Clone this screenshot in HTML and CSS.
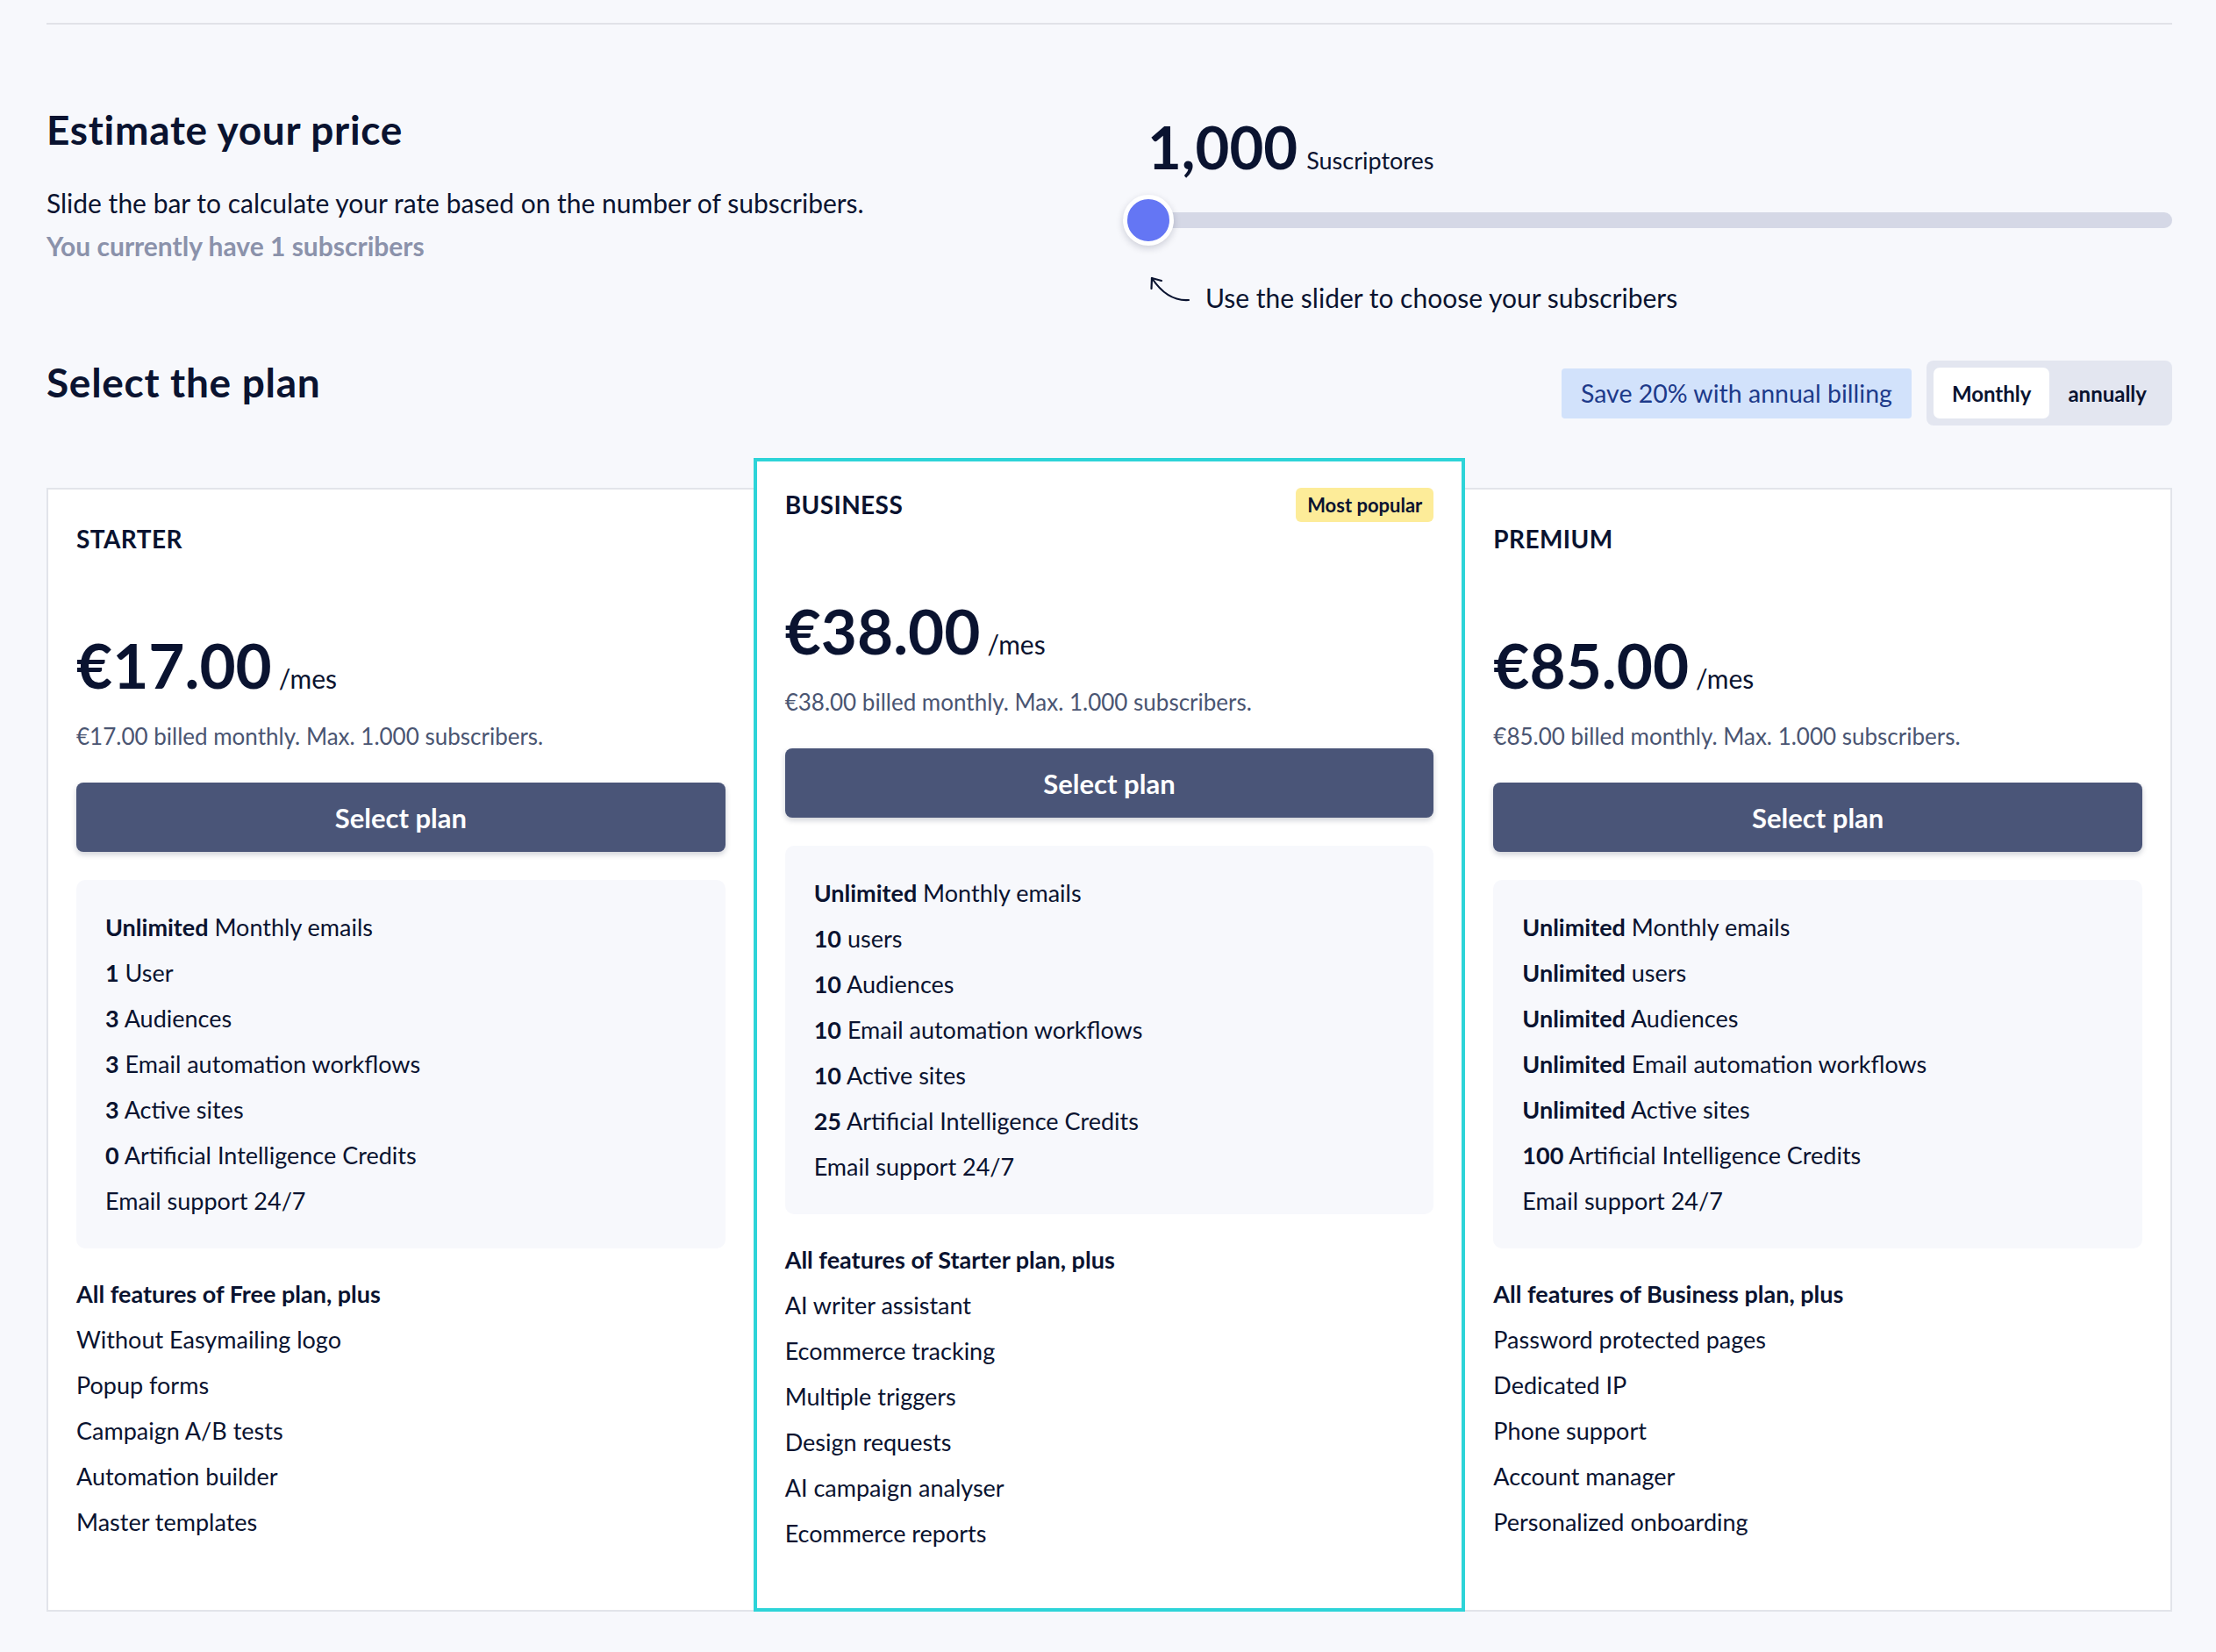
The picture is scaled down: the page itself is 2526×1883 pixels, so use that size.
FILE: index.html
```html
<!DOCTYPE html>
<html lang="en">
<head>
    <meta charset="UTF-8">
    <meta name="viewport" content="width=device-width, initial-scale=1.0">
    <title>Pricing</title>
    <link rel="stylesheet" href="styles.css">
</head>
<body>
    <div class="page">
        <hr class="divider">

        <section class="estimate">
            <div class="estimate-text">
                <h2>Estimate your price</h2>
                <p class="lead">Slide the bar to calculate your rate based on the number of subscribers.</p>
                <p class="current">You currently have 1 subscribers</p>
            </div>
            <div class="estimate-slider">
                <div class="count">
                    <span class="count-num">1,000</span>
                    <span class="count-label">Suscriptores</span>
                </div>
                <div class="slider">
                    <div class="track"></div>
                    <div class="thumb"></div>
                </div>
                <div class="hint">
                    <svg width="46" height="30" viewBox="0 0 46 30" fill="none" stroke="#0a1330" stroke-width="2.2" stroke-linecap="round" stroke-linejoin="round">
                        <path d="M45 28 C31 29 17 24 3 3"/>
                        <path d="M3 3 L2.5 15"/>
                        <path d="M3 3 L14 6"/>
                    </svg>
                    <span>Use the slider to choose your subscribers</span>
                </div>
            </div>
        </section>

        <section class="plans-head">
            <h2>Select the plan</h2>
            <div class="billing">
                <span class="save">Save 20% with annual billing</span>
                <div class="toggle">
                    <button class="active">Monthly</button>
                    <button>annually</button>
                </div>
            </div>
        </section>

        <section class="plans">
            <div class="plan">
                <div class="plan-head">
                    <h3>STARTER</h3>
                </div>
                <div class="price"><span class="amount">€17.00</span><span class="per">/mes</span></div>
                <p class="billed">€17.00 billed monthly. Max. 1.000 subscribers.</p>
                <button class="select">Select plan</button>
                <ul class="limits">
                    <li><b>Unlimited</b> Monthly emails</li>
                    <li><b>1</b> User</li>
                    <li><b>3</b> Audiences</li>
                    <li><b>3</b> Email automation workflows</li>
                    <li><b>3</b> Active sites</li>
                    <li><b>0</b> Artificial Intelligence Credits</li>
                    <li>Email support 24/7</li>
                </ul>
                <ul class="extras">
                    <li class="extras-title">All features of Free plan, plus</li>
                    <li>Without Easymailing logo</li>
                    <li>Popup forms</li>
                    <li>Campaign A/B tests</li>
                    <li>Automation builder</li>
                    <li>Master templates</li>
                </ul>
            </div>

            <div class="plan popular">
                <div class="plan-head">
                    <h3>BUSINESS</h3>
                    <span class="badge">Most popular</span>
                </div>
                <div class="price"><span class="amount">€38.00</span><span class="per">/mes</span></div>
                <p class="billed">€38.00 billed monthly. Max. 1.000 subscribers.</p>
                <button class="select">Select plan</button>
                <ul class="limits">
                    <li><b>Unlimited</b> Monthly emails</li>
                    <li><b>10</b> users</li>
                    <li><b>10</b> Audiences</li>
                    <li><b>10</b> Email automation workflows</li>
                    <li><b>10</b> Active sites</li>
                    <li><b>25</b> Artificial Intelligence Credits</li>
                    <li>Email support 24/7</li>
                </ul>
                <ul class="extras">
                    <li class="extras-title">All features of Starter plan, plus</li>
                    <li>AI writer assistant</li>
                    <li>Ecommerce tracking</li>
                    <li>Multiple triggers</li>
                    <li>Design requests</li>
                    <li>AI campaign analyser</li>
                    <li>Ecommerce reports</li>
                </ul>
            </div>

            <div class="plan">
                <div class="plan-head">
                    <h3>PREMIUM</h3>
                </div>
                <div class="price"><span class="amount">€85.00</span><span class="per">/mes</span></div>
                <p class="billed">€85.00 billed monthly. Max. 1.000 subscribers.</p>
                <button class="select">Select plan</button>
                <ul class="limits">
                    <li><b>Unlimited</b> Monthly emails</li>
                    <li><b>Unlimited</b> users</li>
                    <li><b>Unlimited</b> Audiences</li>
                    <li><b>Unlimited</b> Email automation workflows</li>
                    <li><b>Unlimited</b> Active sites</li>
                    <li><b>100</b> Artificial Intelligence Credits</li>
                    <li>Email support 24/7</li>
                </ul>
                <ul class="extras">
                    <li class="extras-title">All features of Business plan, plus</li>
                    <li>Password protected pages</li>
                    <li>Dedicated IP</li>
                    <li>Phone support</li>
                    <li>Account manager</li>
                    <li>Personalized onboarding</li>
                </ul>
            </div>
        </section>
    </div>
</body>
</html>
```

FILE: styles.css
```css
body {
    margin: 0;
    background-color: #f7f8fc;
    font-family: Lato, "Open Sans", sans-serif;
    color: #0a1330;
}
.page {
    padding: 26px 50px 40px 53px;
}
h2, h3, p, ul {
    margin: 0;
}
.divider {
    margin: 0;
    border: none;
    height: 2px;
    background-color: #e1e2e8;
}

/* estimate */
.estimate {
    display: grid;
    grid-template-columns: 1fr 1fr;
    column-gap: 31px;
    margin-top: 93px;
}
h2 {
    font-size: 46px;
    font-weight: 700;
    line-height: 54px;
    letter-spacing: 0.7px;
}
.lead, .current {
    font-size: 30px;
    line-height: 49px;
}
.lead {
    margin-top: 32px;
}
.current {
    color: #8b92ab;
    font-weight: 700;
}
.estimate-slider {
    padding-top: 6px;
}
.count {
    display: flex;
    align-items: baseline;
    margin-left: 28px;
}
.count-num {
    font-size: 67px;
    font-weight: 700;
    line-height: 80px;
}
.count-label {
    font-size: 27px;
    margin-left: 10px;
}
.slider {
    position: relative;
    box-sizing: border-box;
    height: 58px;
    padding-top: 20px;
    margin-top: 15px;
}
.track {
    height: 18px;
    border-radius: 9px;
    background-color: #d5d8e6;
}
.thumb {
    position: absolute;
    left: 0;
    top: 0;
    width: 48px;
    height: 48px;
    border: 5px solid #fff;
    border-radius: 50%;
    background-color: #6476f4;
    box-shadow: 0 3px 8px rgba(10, 19, 48, 0.18);
}
.hint {
    display: flex;
    align-items: flex-start;
    margin: 39px 0 0 30px;
    font-size: 30px;
    line-height: 40px;
}
.hint svg {
    margin: -5px 18px 0 0;
}

/* plans header */
.plans-head {
    display: flex;
    justify-content: space-between;
    align-items: flex-start;
    margin-top: 50px;
}
.billing {
    display: flex;
    align-items: center;
    gap: 17px;
    margin-top: 2px;
}
.save {
    display: flex;
    align-items: center;
    height: 57px;
    padding: 0 22px;
    border-radius: 4px;
    background-color: #d2e2fb;
    color: #1d3a8a;
    font-size: 28.5px;
}
.toggle {
    display: flex;
    padding: 8px;
    border-radius: 8px;
    background-color: #e3e6f0;
}
.toggle button {
    height: 58px;
    padding: 0 21px;
    border: none;
    border-radius: 7px;
    background: none;
    font-family: inherit;
    font-size: 24px;
    font-weight: 700;
    color: #0a1330;
}
.toggle button.active {
    background-color: #fff;
}

/* plan cards */
.plans {
    display: grid;
    grid-template-columns: repeat(3, 1fr);
    margin-top: 71px;
}
.plan {
    background: #fff;
    border: 2px solid #e2e4ea;
    padding: 32px 32px 59px;
}
.plan.popular {
    position: relative;
    z-index: 1;
    margin: -34px -2px 0;
    border: 4px solid #2dd4d8;
    padding-top: 25px;
}
.plan-head {
    display: flex;
    justify-content: space-between;
    align-items: center;
    min-height: 48px;
}
h3 {
    font-size: 28px;
    font-weight: 700;
    line-height: 34px;
    letter-spacing: 0.4px;
}
.badge {
    padding: 0 13px;
    height: 39px;
    line-height: 39px;
    border-radius: 6px;
    background-color: #fdec99;
    font-size: 22px;
    font-weight: 700;
}
.price {
    display: flex;
    align-items: baseline;
    gap: 8px;
    margin-top: 77px;
}
.amount {
    font-size: 71px;
    font-weight: 700;
    line-height: 85px;
}
.per {
    font-size: 30px;
}
.billed {
    margin-top: 21px;
    font-size: 26px;
    line-height: 36px;
    color: #4a5572;
}
button.select {
    display: block;
    width: 100%;
    height: 79px;
    margin-top: 35px;
    border: none;
    border-radius: 8px;
    background-color: #4a5578;
    box-shadow: 0 3px 6px rgba(10, 19, 48, 0.2);
    color: #fff;
    font-family: inherit;
    font-size: 31px;
    font-weight: 700;
}
.limits, .extras {
    list-style: none;
    padding: 0;
    font-size: 27px;
    line-height: 52px;
}
.limits {
    margin-top: 32px;
    padding: 28px 33px;
    border-radius: 10px;
    background-color: #f7f8fc;
}
.extras {
    margin-top: 26px;
}
.extras-title {
    font-weight: 700;
}
```
